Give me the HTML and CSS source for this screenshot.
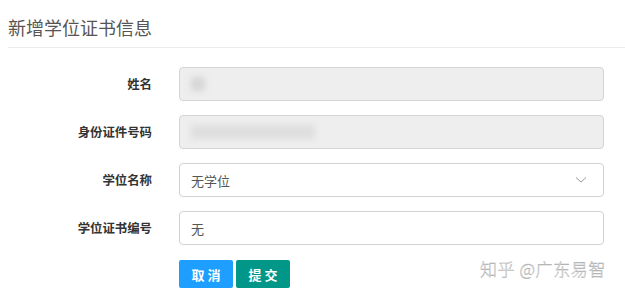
FILE: index.html
```html
<!DOCTYPE html>
<html lang="zh-CN">
<head>
  <meta charset="UTF-8" />
  <title>新增学位证书信息</title>
  <link rel="stylesheet" href="styles.css">
</head>
<body>
  <div class="page">
    <div class="page-header">新增学位证书信息</div>

    <form class="form">
      <div class="form-row">
        <label class="form-label">姓名</label>
        <div class="form-input disabled">
          <span class="blur blur-name"></span>
        </div>
      </div>
      <div class="form-row">
        <label class="form-label">身份证件号码</label>
        <div class="form-input disabled">
          <span class="blur blur-id"></span>
        </div>
      </div>
      <div class="form-row">
        <label class="form-label">学位名称</label>
        <div class="form-input select">
          <span>无学位</span>
          <svg class="chevron" width="12" height="8" viewBox="0 0 12 8">
            <path d="M1 1.5 L6 6 L11 1.5" fill="none" stroke="#999" stroke-width="1"/>
          </svg>
        </div>
      </div>
      <div class="form-row">
        <label class="form-label">学位证书编号</label>
        <div class="form-input">无</div>
      </div>
      <div class="form-actions">
        <button type="button" class="btn btn-blue">取 消</button>
        <button type="button" class="btn btn-green">提 交</button>
      </div>
    </form>

    <div class="watermark">知乎 @广东易智</div>
  </div>
</body>
</html>
```

FILE: styles.css
```css
html, body {
  margin: 0;
  padding: 0;
  background: #fff;
  font-family: "Noto Sans CJK SC", "Liberation Sans", sans-serif;
}
.page {
  width: 625px;
  height: 295px;
  position: relative;
  overflow: hidden;
}
.page-header {
  margin-left: 8px;
  padding-top: 14px;
  padding-bottom: 7px;
  line-height: 26px;
  font-size: 18px;
  color: #555;
  border-bottom: 1px solid #ececec;
}
.form {
  margin-top: 19px;
}
.form-row {
  display: flex;
  align-items: center;
  gap: 27px;
  margin-bottom: 14px;
}
.form-label {
  width: 144px;
  margin-left: 8px;
  text-align: right;
  font-size: 12.4px;
  font-weight: bold;
  color: #333;
}
.form-input {
  box-sizing: border-box;
  width: 425px;
  height: 34px;
  border: 1px solid #d2d2d2;
  border-radius: 4px;
  padding: 0 11px;
  display: flex;
  align-items: center;
  font-size: 13px;
  color: #555;
  background: #fff;
}
.form-input.disabled {
  background: #eee;
  border-color: #d4d4d4;
}
.form-input.select {
  justify-content: space-between;
  padding-right: 16px;
}
.blur {
  display: inline-block;
  height: 14px;
  background: #d6d6d6;
  filter: blur(3px);
}
.blur-name {
  width: 14px;
}
.blur-id {
  width: 124px;
  background: #dedede;
}
.form-actions {
  display: flex;
  gap: 3px;
  margin-left: 179px;
  margin-top: 15px;
}
.btn {
  width: 54px;
  height: 28px;
  border: none;
  border-radius: 2px;
  color: #fff;
  font-size: 13px;
  font-weight: bold;
  font-family: inherit;
  padding: 0;
}
.btn-blue {
  background: #1e9fff;
}
.btn-green {
  background: #009688;
}
.watermark {
  position: absolute;
  right: 19px;
  top: 256px;
  font-size: 17px;
  font-weight: 300;
  color: #f4f4f4;
  -webkit-text-stroke: 0.4px #aaa;
  letter-spacing: 0.6px;
}
```
